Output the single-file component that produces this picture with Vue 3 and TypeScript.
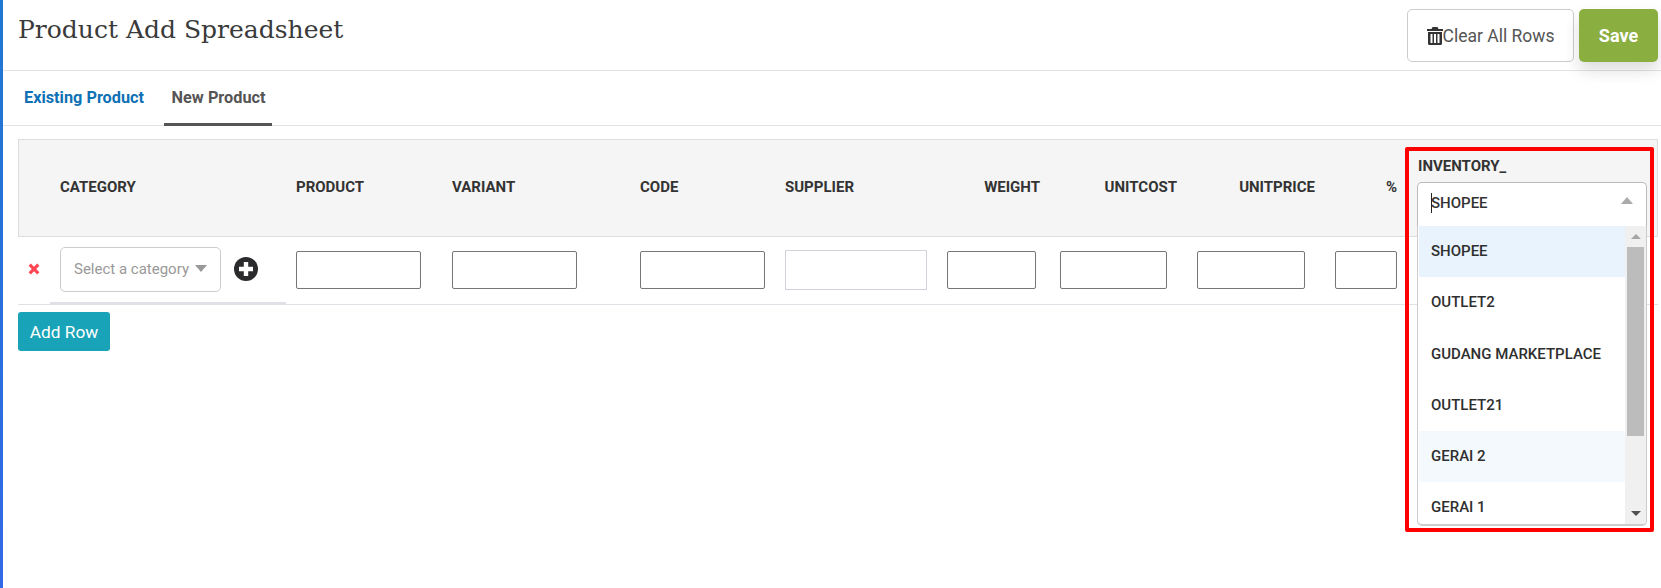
<script setup lang="ts">
const options: { label: string; cls: string }[] = [
  { label: 'SHOPEE', cls: 'selected' },
  { label: 'OUTLET2', cls: '' },
  { label: 'GUDANG MARKETPLACE', cls: '' },
  { label: 'OUTLET21', cls: '' },
  { label: 'GERAI 2', cls: 'hover' },
  { label: 'GERAI 1', cls: '' },
]
</script>

<template>
  <div class="page">
    <header class="top">
      <h1 class="title">Product Add Spreadsheet</h1>
      <div class="actions">
        <button class="btn-clear">
          <svg class="trash" viewBox="0 0 16 18" width="16" height="18">
            <path fill="#333" d="M5.500 0h5l1 2H16v2H0V2h4.500zM1 5h14v11.500A1.500 1.500 0 0 1 13.500 18h-11A1.500 1.500 0 0 1 1 16.500zm2.500 2v9h2V7zm3.500 0v9h2V7zm3.500 0v9h2V7z" />
          </svg>Clear All Rows
        </button>
        <button class="btn-save">Save</button>
      </div>
    </header>

    <nav class="tabs">
      <a class="tab link">Existing Product</a>
      <a class="tab active">New Product</a>
    </nav>

    <main class="content">
      <div class="sheet">
        <div class="head">
          <div class="th cat">CATEGORY</div>
          <div class="th">PRODUCT</div>
          <div class="th">VARIANT</div>
          <div class="th">CODE</div>
          <div class="th">SUPPLIER</div>
          <div class="th right">WEIGHT</div>
          <div class="th right">UNITCOST</div>
          <div class="th right">UNITPRICE</div>
          <div class="th right">%</div>
          <div class="inv">
            <span class="inv-label">INVENTORY_</span>
            <div class="combo">
              <span class="caret-bar"></span>
              <span class="combo-value">SHOPEE</span>
              <span class="tri-up"></span>
              <div class="menu">
                <ul class="list">
                  <li v-for="o in options" :key="o.label" :class="o.cls">{{ o.label }}</li>
                </ul>
                <div class="scrollbar">
                  <span class="sb-up"></span>
                  <span class="sb-thumb"></span>
                  <span class="sb-down"></span>
                </div>
              </div>
            </div>
          </div>
        </div>

        <div class="row">
          <div class="td cat-cell">
            <svg class="remove" viewBox="0 0 12 12" width="12" height="12">
              <path fill="#ff4453" d="M2.800.6 6 3.800 9.200.6l2.200 2.200L8.200 6l3.200 3.200-2.200 2.200L6 8.200l-3.200 3.200L.6 9.200 3.800 6 .6 2.800z" />
            </svg>
            <div class="select-cat">
              <span>Select a category</span>
              <i class="tri-down"></i>
            </div>
            <svg class="plus" viewBox="0 0 24 24" width="24" height="24">
              <circle cx="12" cy="12" r="12" fill="#2b2b2e" />
              <path fill="#fff" d="M9.800 5h4.400v4.800H19v4.400h-4.800V19H9.800v-4.800H5V9.800h4.800z" />
            </svg>
            <span class="under"></span>
          </div>
          <div class="td"><input class="inp w125" type="text" /></div>
          <div class="td"><input class="inp w125" type="text" /></div>
          <div class="td"><input class="inp w125" type="text" /></div>
          <div class="td"><input class="inp sup" type="text" /></div>
          <div class="td"><input class="inp w89" type="text" /></div>
          <div class="td"><input class="inp w107" type="text" /></div>
          <div class="td"><input class="inp w108" type="text" /></div>
          <div class="td"><input class="inp w62" type="text" /></div>
          <div class="td"></div>
        </div>

        <button class="btn-add">Add Row</button>
      </div>
      <div class="callout"></div>
    </main>
  </div>
</template>

<style scoped>
.page {
  position: relative;
  box-sizing: border-box;
  min-height: 588px;
  border-left: 3px solid #2a70dc;
  border-image: linear-gradient(#1f78d1, #3369e6) 1;
  font-family: Roboto, "Liberation Sans", sans-serif;
  color: #333;
  background: #fff;
  overflow: hidden;
}
.top {
  box-sizing: border-box;
  display: flex;
  justify-content: space-between;
  height: 71px;
  border-bottom: 1px solid #e3e3e3;
  padding: 9px 3px 0 15px;
}
.title {
  margin: 5px 0 0;
  font-family: "DejaVu Serif", serif;
  font-size: 25px;
  line-height: 32px;
  font-weight: 400;
  color: #3a3a3a;
}
.actions {
  display: flex;
  gap: 5px;
  height: 53px;
}
.btn-clear {
  display: flex;
  align-items: center;
  justify-content: center;
  width: 167px;
  padding: 0;
  border: 1px solid #ccc;
  border-radius: 5px;
  background: #fff;
  font: 400 17.500px Roboto, sans-serif;
  color: #555;
}
.btn-save {
  width: 79px;
  padding: 0;
  border: 0;
  border-radius: 5px;
  background: #8bae41;
  color: #fff;
  font: 700 18px Roboto, sans-serif;
  box-shadow: 0 8px 16px rgba(0, 0, 0, 0.14);
}
.tabs {
  box-sizing: border-box;
  display: flex;
  height: 55px;
  padding-left: 15px;
  border-bottom: 1px solid #e3e3e3;
}
.tab {
  box-sizing: border-box;
  height: 55px;
  padding: 17px 7.500px 0;
  font-size: 16.300px;
  line-height: 20px;
  font-weight: 700;
  white-space: nowrap;
}
.link {
  padding-left: 6px;
  padding-right: 20px;
  color: #0f71b5;
}
.active {
  width: 108px;
  color: #555;
  border-bottom: 3px solid #555;
}
.content {
  position: relative;
  padding: 13px 3px 0 15px;
}
.head,
.row {
  display: grid;
  grid-template-columns: 278px 156px 188px 145px 162px 114px 136px 139px 69px 253px;
  box-sizing: border-box;
  width: 1640px;
}
.head {
  height: 98px;
  background: #f5f5f5;
  border: 1px solid #ddd;
  align-items: center;
}
.th {
  margin-bottom: 2px;
  font-size: 15px;
  font-weight: 700;
  color: #333;
}
.cat { padding-left: 41px; }
.th:not(.cat):not(.right) { margin-left: -1px; }
.right { text-align: right; padding-right: 22px; }
.right:nth-child(7) { padding-right: 21px; }
.right:nth-child(9) { padding-right: 9px; }
.inv {
  position: relative;
  align-self: stretch;
  padding: 16px 0 0 11px;
  font-size: 15px;
  font-weight: 700;
}
.inv-label {
  display: block;
  padding-left: 1px;
  line-height: 20px;
}
.combo {
  position: relative;
  display: flex;
  align-items: center;
  box-sizing: border-box;
  width: 230px;
  height: 45px;
  margin-top: 6px;
  padding: 0 0 3px 13px;
  border: 1px solid #bbb;
  border-bottom-color: #ddd;
  border-radius: 5px 5px 0 0;
  background: #fff;
  font-size: 15px;
}
.caret-bar {
  position: absolute;
  left: 13px;
  top: 10px;
  width: 1px;
  height: 20px;
  background: #222;
}
.combo-value { font-weight: 500; }
.tri-up {
  position: absolute;
  right: 13px;
  top: 14px;
  border-left: 6px solid transparent;
  border-right: 6px solid transparent;
  border-bottom: 7px solid #aaa;
}
.menu {
  position: absolute;
  left: -1px;
  right: -1px;
  top: 43px;
  display: flex;
  height: 300px;
  box-sizing: border-box;
  border: 1px solid #ccc;
  border-top: 0;
  border-bottom: 2px solid #ccc;
  border-radius: 0 0 5px 5px;
  background: #fff;
  overflow: hidden;
  z-index: 2;
}
.list {
  flex: 1;
  margin: 0;
  padding: 0 0 0 1px;
  list-style: none;
}
.list li {
  height: 51.300px;
  line-height: 51px;
  padding-left: 12px;
  font-size: 15px;
  font-weight: 500;
  color: #2f2f2f;
}
.list li.selected { background: #e8f3fd; }
.list li.hover { background: #f4f9fd; }
.scrollbar {
  position: relative;
  width: 21px;
  background: #f0f0f0;
}
.sb-thumb {
  position: absolute;
  left: 2px;
  right: 2px;
  top: 21px;
  height: 189px;
  background: #bcbcbc;
}
.sb-up,
.sb-down {
  position: absolute;
  left: 6px;
  border-left: 5px solid transparent;
  border-right: 5px solid transparent;
}
.sb-up {
  top: 8px;
  border-bottom: 5px solid #a6a6a6;
}
.sb-down {
  bottom: 8px;
  border-top: 5px solid #505050;
}
.row {
  height: 68px;
  border-bottom: 1px solid #dfe1e6;
  align-items: center;
}
.td { display: flex; align-items: center; }
.cat-cell {
  position: relative;
  align-self: stretch;
}
.remove { margin: 0 0 3px 10px; }
.select-cat {
  box-sizing: border-box;
  display: flex;
  align-items: center;
  width: 161px;
  height: 45px;
  margin: 0 0 3px 20px;
  padding-left: 13px;
  border: 1px solid #ccc;
  border-radius: 5px;
  font-size: 15px;
  color: #999;
}
.tri-down {
  margin-left: 6px;
  margin-top: -2px;
  border-left: 6px solid transparent;
  border-right: 6px solid transparent;
  border-top: 7px solid #999;
}
.plus { margin: 0 0 3px 13px; }
.under {
  position: absolute;
  left: 32px;
  width: 236px;
  bottom: 0;
  height: 2px;
  background: #dfe1e6;
}
.inp {
  box-sizing: border-box;
  height: 38px;
  margin: 0 0 1px;
  padding: 0;
  border: 1px solid #767676;
  border-radius: 2px;
  background: #fff;
  outline: none;
}
.w125 { width: 125px; }
.sup { width: 142px; height: 40px; border-color: #d0d4da; border-radius: 0; }
.w89 { width: 89px; }
.w107 { width: 107px; margin-left: -1px; }
.w108 { width: 108px; }
.w62 { width: 62px; margin-left: -1px; }
.btn-add {
  display: block;
  width: 92px;
  height: 39px;
  margin-top: 7px;
  padding: 0;
  border: 0;
  border-radius: 3px;
  background: #18a3b8;
  color: #fff;
  font: 400 17.300px Roboto, sans-serif;
}
.callout {
  position: absolute;
  left: 1402px;
  top: 21px;
  width: 249px;
  height: 385px;
  box-sizing: border-box;
  border: 4px solid #f00;
  border-radius: 2px;
  pointer-events: none;
  z-index: 3;
}
</style>
